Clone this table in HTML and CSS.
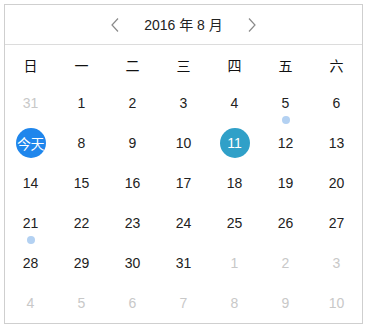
FILE: index.html
```html
<!DOCTYPE html>
<html>
<head>
<meta charset="utf-8">
<link rel="stylesheet" href="styles.css">
</head>
<body>
<div class="calendar">
  <div class="header">
    <span class="arrow"><svg width="8" height="14" viewBox="0 0 8 14"><path d="M7 0.5 L1 7 L7 13.5" fill="none" stroke="#8a8a8a" stroke-width="1.2"/></svg></span>
    <span class="title">2016 年 8 月</span>
    <span class="arrow"><svg width="8" height="14" viewBox="0 0 8 14"><path d="M1 0.5 L7 7 L1 13.5" fill="none" stroke="#8a8a8a" stroke-width="1.2"/></svg></span>
  </div>
  <div class="weekdays">
    <span>日</span><span>一</span><span>二</span><span>三</span><span>四</span><span>五</span><span>六</span>
  </div>
  <div class="days">
    <span class="day other">31</span><span class="day">1</span><span class="day">2</span><span class="day">3</span><span class="day">4</span><span class="day dot">5</span><span class="day">6</span>
    <span class="day"><b class="today">今天</b></span><span class="day">8</span><span class="day">9</span><span class="day">10</span><span class="day"><b class="selected">11</b></span><span class="day">12</span><span class="day">13</span>
    <span class="day">14</span><span class="day">15</span><span class="day">16</span><span class="day">17</span><span class="day">18</span><span class="day">19</span><span class="day">20</span>
    <span class="day dot">21</span><span class="day">22</span><span class="day">23</span><span class="day">24</span><span class="day">25</span><span class="day">26</span><span class="day">27</span>
    <span class="day">28</span><span class="day">29</span><span class="day">30</span><span class="day">31</span><span class="day other">1</span><span class="day other">2</span><span class="day other">3</span>
    <span class="day other">4</span><span class="day other">5</span><span class="day other">6</span><span class="day other">7</span><span class="day other">8</span><span class="day other">9</span><span class="day other">10</span>
  </div>
</div>
</body>
</html>
```
FILE: styles.css
```css
html, body {
  margin: 0;
  padding: 0;
  background: #fff;
}
body {
  padding: 4px;
  font-family: "Liberation Sans", "Noto Sans CJK SC", sans-serif;
  font-size: 14px;
  color: #222;
}
.calendar {
  width: 357px;
  border: 1px solid #cfcfcf;
}
.header {
  height: 39px;
  border-bottom: 1px solid #dcdcdc;
  display: flex;
  align-items: center;
  justify-content: center;
  gap: 25px;
}
.arrow {
  display: flex;
  width: 8px;
  height: 14px;
}
.title {
  color: #222;
  font-size: 14px;
  line-height: 14px;
  padding-top: 1px;
}
.weekdays {
  display: grid;
  grid-template-columns: repeat(7, 51px);
  height: 37px;
  align-items: center;
  justify-items: center;
  font-family: "Noto Sans CJK SC", sans-serif;
  color: #111;
  padding-top: 1px;
}
.days {
  display: grid;
  grid-template-columns: repeat(7, 51px);
  grid-auto-rows: 40px;
}
.day {
  position: relative;
  display: flex;
  align-items: center;
  justify-content: center;
  color: #222;
}
.day.other {
  color: #c8c8c8;
}
.day.dot::after {
  content: "";
  position: absolute;
  left: 50%;
  top: 33px;
  width: 8px;
  height: 8px;
  margin-left: -4px;
  border-radius: 50%;
  background: #b3d1f2;
}
.today, .selected {
  width: 30px;
  height: 30px;
  border-radius: 50%;
  color: #fff;
  font-weight: normal;
  display: flex;
  align-items: center;
  justify-content: center;
}
.today {
  background: #1f86ec;
  font-family: "Noto Sans CJK SC", sans-serif;
  font-size: 14px;
  letter-spacing: -0.5px;
}
.selected {
  background: #30a0c8;
}
```
